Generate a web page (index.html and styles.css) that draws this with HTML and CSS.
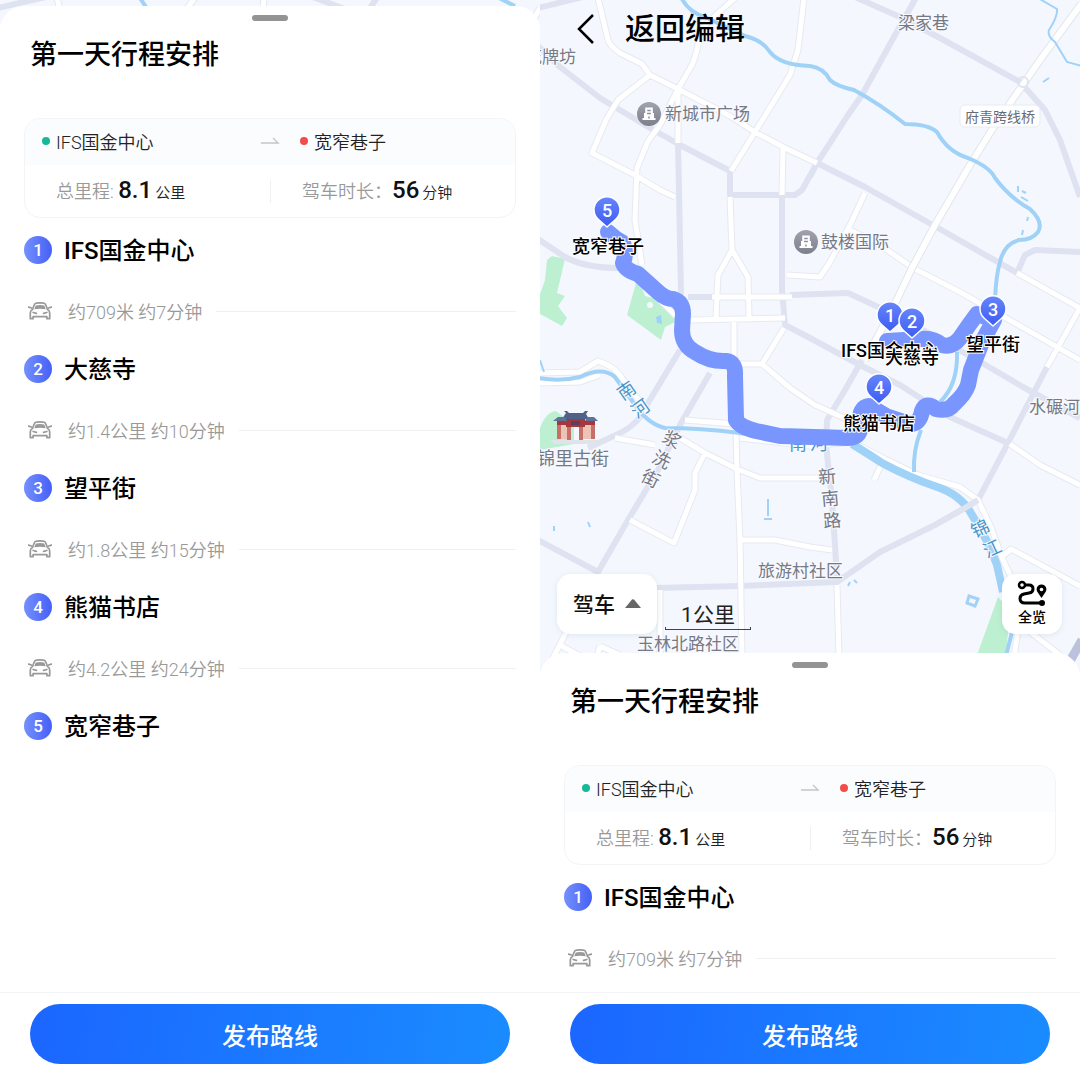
FILE: index.html
```html
<!DOCTYPE html>
<html lang="zh-CN">
<head>
    <meta charset="UTF-8">
    <meta name="viewport" content="width=device-width, initial-scale=1.0">
    <title>第一天行程安排</title>
    <link rel="stylesheet" href="styles.css">
</head>
<body>
    <!-- Shared icons -->
    <svg class="sprite" aria-hidden="true">
        <symbol id="icon-car" viewBox="0 0 24 18">
            <path d="M4.5 7.500 L6.300 2.800 Q6.800 1.200 8.500 1.100 Q12 .7 15.500 1.100 Q17.200 1.200 17.700 2.800 L19.500 7.500 Q21.700 8.600 21.700 11 V16.700 H18.900 V14.700 H5.100 V16.700 H2.300 V11 Q2.300 8.600 4.500 7.500Z" fill="none" stroke="#999" stroke-width="1.700" stroke-linejoin="round"/>
            <path d="M6.300 7.200 L7.700 3.400 Q12 2.500 16.300 3.400 L17.700 7.200 Q12 6.200 6.300 7.200Z" fill="#999"/>
            <path d="M.6 5.200 L3.400 6 M23.400 5.200 L20.600 6 M5.200 10.500 L8.400 11.300 M18.800 10.500 L15.600 11.300" stroke="#999" stroke-width="1.800" stroke-linecap="round"/>
        </symbol>
        <symbol id="icon-arrow" viewBox="0 0 20 10">
            <path d="M1 7 H18 L13 2" fill="none" stroke="#c4c6c8" stroke-width="1.400"/>
        </symbol>
    </svg>

    <main class="screens">
        <!-- Full itinerary -->
        <section class="screen">
            <div class="map map-peek">
                <svg class="map-canvas" viewBox="0 0 540 26" preserveAspectRatio="xMidYMin slice" aria-hidden="true">
                    <path class="major" d="M-2 8 L50 -4 M310 -4 L358 14 M378 -4 L365 16"/>
                    <path class="minor-case" d="M57 -2 L64 26 M195 -2 L184 12 M264 -2 L262 20 M540 8 L530 26"/>
                    <path class="minor" d="M57 -2 L64 26 M195 -2 L184 12 M264 -2 L262 20 M540 8 L530 26"/>
                    <path class="water" d="M140 -2 L148 10 M497 -3 L515 6"/>
                </svg>
            </div>
            <div class="sheet">
                <div class="handle"></div>
                <h1 class="sheet-title">第一天行程安排</h1>
                <div class="summary">
                    <div class="summary-route">
                        <span class="place place-from">IFS国金中心</span>
                        <svg class="arrow" aria-hidden="true"><use href="#icon-arrow"/></svg>
                        <span class="place place-to">宽窄巷子</span>
                    </div>
                    <div class="summary-stats">
                        <p class="stat">总里程: <strong>8.1</strong><small>公里</small></p>
                        <p class="stat stat-time">驾车时长：<strong>56</strong><small>分钟</small></p>
                    </div>
                </div>
                <ol class="stops">
                    <li>
                        <h2 class="stop"><span class="badge">1</span>IFS国金中心</h2>
                        <p class="leg"><svg class="car" aria-hidden="true"><use href="#icon-car"/></svg>约709米 约7分钟</p>
                    </li>
                    <li>
                        <h2 class="stop"><span class="badge">2</span>大慈寺</h2>
                        <p class="leg"><svg class="car" aria-hidden="true"><use href="#icon-car"/></svg>约1.4公里 约10分钟</p>
                    </li>
                    <li>
                        <h2 class="stop"><span class="badge">3</span>望平街</h2>
                        <p class="leg"><svg class="car" aria-hidden="true"><use href="#icon-car"/></svg>约1.8公里 约15分钟</p>
                    </li>
                    <li>
                        <h2 class="stop"><span class="badge">4</span>熊猫书店</h2>
                        <p class="leg"><svg class="car" aria-hidden="true"><use href="#icon-car"/></svg>约4.2公里 约24分钟</p>
                    </li>
                    <li>
                        <h2 class="stop"><span class="badge">5</span>宽窄巷子</h2>
                    </li>
                </ol>
            </div>
            <footer class="footer">
                <button type="button" class="publish">发布路线</button>
            </footer>
        </section>

        <!-- Map with collapsed itinerary -->
        <section class="screen">
            <div class="map">
                <svg class="map-canvas" viewBox="0 0 540 673" preserveAspectRatio="xMidYMin slice">
                    <defs>
                        <linearGradient id="pin-fill" x1="0" y1="0" x2="0" y2="1">
                            <stop offset="0" stop-color="#6686fb"/>
                            <stop offset="1" stop-color="#3d5bf3"/>
                        </linearGradient>
                        <linearGradient id="poi-fill" x1="0" y1="0" x2="0" y2="1">
                            <stop offset="0" stop-color="#a0a3ac"/>
                            <stop offset="1" stop-color="#7d808b"/>
                        </linearGradient>
                        <path id="pin" d="M0 0 L-8.500 -7.500 A13 13 0 1 1 8.500 -7.500 Z" fill="url(#pin-fill)" stroke="#fff" stroke-width="1.500" stroke-linejoin="round"/>
                        <g id="poi">
                            <circle r="12" fill="url(#poi-fill)"/>
                            <path d="M-6.500 6 V4 H-5 V-1 H-3.800 V-6.500 H3.800 V-1 H5 V4 H6.500 V6 Z" fill="#fff"/>
                            <path d="M-1.700 -3.500 H1.700 M-1.900 -.5 H1.900 M0 4.500 V2.500" fill="none" stroke="#8b8e98" stroke-width="1.500"/>
                        </g>
                        <path id="minor-roads" d="M58 -2 L68 40 Q70 46 80 53 L102 64 L110 75 L138 89 L190 116 L215 132 L245 148 L277 163
                            M195 -2 L178 13 L160 30 Q158 52 152 65 L138 89 L120 125 L108 141 L97 168 L95 220 L102 265
                            M110 75 L78 100 L66 120 L52 153 L95 175 L120 190 L135 197
                            M264 -2 L258 50 L250 75 L215 132 L191 171
                            M138 89 V143
                            M243 148 L242 195
                            M325 193 L310 225 L290 262 L280 277 L247 275
                            M310 230 L340 245 L373 268 L420 292 L540 360
                            M477 273 L540 308 L507 367
                            M190 197 L192 250 L178 275 L176 317 M192 250 L208 277 L209 317
                            M172 297 H252 M150 320 L245 318 M194 320 V362
                            M200 364 H222 L244 328 M222 364 L250 388 L275 405 L320 425
                            M120 300 L136 316
                            M-2 373 L40 372 L58 361 Q74 366 82 378 L108 412 M-2 383 L40 382 L60 375
                            M75 438 L115 445 M145 420 L195 424
                            M140 438 L165 453 L197 469 L220 478 H290
                            M196 430 L197 470 L200 540 L202 658
                            M165 453 L155 473 V490 L134 543 L90 520
                            M200 540 H235 L270 547 L292 550
                            M120 590 V658 M297 585 L299 658
                            M40 605 L12 660 M20 645 L40 656 M60 646 L56 660 M60 646 L80 655
                            M200 438 L270 446 L312 442 L345 459 L378 475 L420 487 L438 500 L450 525 L463 560 L482 600 L474 658
                            M342 463 L334 480
                            M463 556 L471 549 L540 586
                            M470 444 L500 465 L540 485
                            M485 628 L520 655"/>
                    </defs>

                    <!-- Parks -->
                    <g fill="#bdf0d1">
                        <path d="M-2 300 L5 280 L7 260 L12 256 L25 259 L17 293 L25 296 L18 306 L27 318 L22 326 L-2 313Z"/>
                        <path d="M98 276 L87 315 L121 340 L125 327 L135 322 L135 315 L120 300 L105 296Z"/>
                        <path d="M0 428 Q6 412 16 411 L34 425 V444 L0 450Z"/>
                        <path d="M458 597 L437 655 H466 L470 610Z"/>
                    </g>
                    <circle cx="110" cy="305" r="3" fill="#f4f8fe"/>
                    <path d="M116 317 L121 315 L122 324 L117 323Z" fill="#9fd2f8"/>

                    <!-- Roads -->
                    <path class="major" d="M-2 8 L55 -6 M-2 46 L20 67 L60 98 L110 128 L140 145 L190 171 V195 H255 L262 190 L277 163
                        M377 -4 L355 35 L322 95 L308 115 L292 140 L277 163 L270 177
                        M315 -3 L360 17 L400 38 L480 82 L505 110 L520 140 L540 197
                        M138 143 L139 190 L141 295 M277 163 L325 187 L398 228 L477 273 L485 255 L495 250 L540 252
                        M242 195 V290 L245 325 L270 338 L320 365 L360 385 L410 417 L470 444
                        M148 297 H172 M250 295 L308 293 L360 317 L437 360 L483 387 L540 418
                        M-2 239 L25 257 Q45 268 80 268
                        M140 350 L108 403 Q100 424 78 434 L48 448
                        M170 373 L140 425 L118 470 L88 520 L58 572 L-2 540
                        M322 360 L305 390 L287 420 L286 445 L292 500 L295 545 L297 580
                        M507 367 L490 400 L468 443 L438 500 L425 508 L395 525 L340 552 L297 582 L200 586 L115 588"/>
                    <path d="M542 640 L526 668" stroke="#bcc2de" stroke-width="9"/>
                    <use href="#minor-roads" class="minor-case"/>
                    <use href="#minor-roads" class="minor"/>
                    <g fill="none">
                        <path d="M542 3 L500 60 L455 125 L430 165 L395 225 L372 268 L352 310 L325 360" stroke="#e2e5ec" stroke-width="8"/>
                        <path d="M542 3 L500 60 L455 125 L430 165 L395 225 L372 268 L352 310 L325 360" stroke="#fff" stroke-width="6"/>
                    </g>
                    <circle cx="483" cy="82" r="5" fill="none" stroke="#dde3f0" stroke-width="2"/>

                    <!-- Water -->
                    <g class="water">
                        <path d="M141 -3 Q148 12 165 17 L205 36 Q222 40 230 52 Q240 65 270 66 Q284 68 290 80 Q296 86 314 90 Q340 104 365 124 Q388 124 397 132 Q408 152 428 158 Q450 167 455 178 Q470 198 490 209 Q504 222 498 232 Q492 240 479 240 Q464 244 460 262 Q456 275 455 300"/>
                        <path d="M417 352 Q418 385 400 402 M381 430 Q373 450 374 472"/>
                        <path class="stream" d="M498 -2 L517 9 Q518 16 509 30 Q507 36 515 42 L527 62 L542 66"/>
                        <path class="stream" d="M503 82 L509 78 M478 186 V192 M482 191 L486 193 M481 197 L488 201 M488 217 L487 221 M483 230 L482 235 M228 499 V516 M224 519 H232 M14 526 V531 M48 522 L50 527 M308 586 L310 582 M314 580 L317 583"/>
                        <path class="stream" d="M0 360 L4 372"/>
                        <path d="M-2 378 Q20 382 40 377 Q62 366 75 377 L95 405 Q108 424 125 428 Q160 428 200 433 L270 443 H310"/>
                        <path class="river" d="M312 444 Q330 455 342 463 Q370 478 400 488 Q422 496 432 515 Q448 540 457 565 L463 592"/>
                        <path d="M475 620 L466 656"/>
                    </g>
                    <path d="M429 596 L438 599 L435 606 L427 603Z" fill="none" stroke="#a4d2f6" stroke-width="3"/>
                    <path d="M395 525 L425 508 L438 500" fill="none" stroke="#dfe2ef" stroke-width="6"/>

                    <!-- Old street gate -->
                    <g>
                        <path d="M10 440 H62 L57 444 H14Z" fill="#dfe3ea"/>
                        <path d="M17 422 H29 V439 H17Z M42 422 H55 V439 H42Z" fill="#edc4b4"/>
                        <path d="M17 422 H21 V439 H17Z M27 422 H31 V440 H27Z M39 422 H43 V440 H39Z M51 422 H55 V439 H51Z" fill="#c77069"/>
                        <path d="M26 419 H45 V427 H26Z M17 421 H26 V425 H17Z M45 421 H55 V425 H45Z" fill="#a4383f"/>
                        <path d="M31 421 H40 V425 H31Z" fill="#5a405d"/>
                        <path d="M22 419 L26 413 L24 411 H27 L29 413 H43 L45 411 H48 L46 414 L49 419Z" fill="#4f6188"/>
                        <path d="M13 421 L18 417 H25 L27 421Z M45 421 L47 417 H54 L58 421Z" fill="#5e7399"/>
                    </g>

                    <!-- River name that runs under the route -->
                    <g class="label label-large label-char label-water">
                        <text x="258" y="450">南</text>
                        <text x="279" y="450">河</text>
                    </g>

                    <!-- Route -->
                    <path class="route" d="M68 232 Q75 239 83 243 Q87 253 83 263 Q85 270 98 274 L118 292 Q126 299 133 299 Q143 302 143 314 L142 330 Q142 345 155 352 Q170 362 186 361 Q196 362 195 376 L196 420 Q200 427 216 431 L240 436 L308 438 Q322 438 320 423 Q319 407 329 406 L346 416 L370 424 Q380 424 382 411 Q386 401 396 409 Q408 412 414 404 Q425 394 428 385 L431 370 L442 342 L454 320 L437 314 Q428 326 420 338 Q412 348 402 345 Q393 338 382 339 L347 341"/>

                    <!-- Map labels -->
                    <g class="label">
                        <text x="-15" y="63">花牌坊</text>
                        <text x="358" y="29">梁家巷</text>
                        <text x="125" y="120">新城市广场</text>
                        <text x="281" y="248">鼓楼国际</text>
                        <text x="489" y="413">水碾河</text>
                        <text x="-3" y="465" class="label-large">锦里古街</text>
                        <text x="218" y="577">旅游村社区</text>
                        <text x="97" y="650">玉林北路社区</text>
                    </g>
                    <rect x="420" y="105" width="80" height="22" rx="5" fill="#fff" stroke="#e7eaf2"/>
                    <text x="460" y="122" class="label-bridge">府青跨线桥</text>
                    <g class="label label-large label-char">
                        <text transform="translate(132 439) rotate(27)" y="7">浆</text>
                        <text transform="translate(122 459) rotate(27)" y="7">洗</text>
                        <text transform="translate(111 478) rotate(27)" y="7">街</text>
                        <text transform="translate(287 476) rotate(-5)" y="7">新</text>
                        <text transform="translate(290 498) rotate(-5)" y="7">南</text>
                        <text transform="translate(292 520) rotate(-5)" y="7">路</text>
                    </g>
                    <g class="label label-large label-char label-water">
                        <text transform="translate(86 390) rotate(-35)" y="7">南</text>
                        <text transform="translate(100 408) rotate(-35)" y="7">河</text>
                        <text transform="translate(440 528) rotate(-25)" y="7">锦</text>
                        <text transform="translate(452 548) rotate(-25)" y="7">江</text>
                    </g>

                    <use href="#poi" x="109" y="114"/>
                    <use href="#poi" x="266" y="242"/>

                    <g class="stop-label">
                        <text x="68" y="253">宽窄巷子</text>
                        <text x="350" y="357">IFS国金中心</text>
                        <text x="372" y="364">大慈寺</text>
                        <text x="453" y="351">望平街</text>
                        <text x="339" y="430">熊猫书店</text>
                    </g>

                    <use href="#pin" x="67" y="227"/>
                    <use href="#pin" x="350" y="332"/>
                    <use href="#pin" x="372" y="338"/>
                    <use href="#pin" x="453" y="326"/>
                    <use href="#pin" x="339" y="404"/>
                    <g class="pin-number">
                        <text x="67" y="217">5</text>
                        <text x="350" y="322">1</text>
                        <text x="372" y="328">2</text>
                        <text x="453" y="316">3</text>
                        <text x="339" y="394">4</text>
                    </g>
                </svg>

                <a class="back" href="#">
                    <svg viewBox="0 0 20 32" aria-hidden="true"><path d="M17 2 L3 16 L17 30" fill="none" stroke="#000" stroke-width="2.500"/></svg>
                    返回编辑
                </a>

                <div class="map-tools">
                    <div class="mode">
                        <select aria-label="出行方式">
                            <option>驾车</option>
                        </select>
                        <svg class="mode-arrow" viewBox="0 0 16 9" aria-hidden="true"><path d="M0 9 L7 .6 Q8 -.3 9 .6 L16 9Z" fill="#666"/></svg>
                    </div>
                    <div class="scale">1公里</div>
                    <button type="button" class="overview">
                        <svg viewBox="0 0 30 26" aria-hidden="true">
                            <g fill="none" stroke="#000" stroke-width="3">
                                <circle cx="5" cy="5" r="3" stroke-width="2.500"/>
                                <path d="M8 5 H12 Q16 5 16 9 Q16 12.500 12 13 L7 14 Q3 15 3 18.500 Q3 23 8 23 H24"/>
                            </g>
                            <circle cx="25" cy="23" r="3"/>
                            <path d="M24.500 18 L20.800 12.500 A4.900 4.900 0 1 1 28.200 12.500Z"/>
                            <circle cx="24.500" cy="9.500" r="1.800" fill="#fff"/>
                        </svg>
                        全览
                    </button>
                </div>
            </div>
            <div class="sheet">
                <div class="handle"></div>
                <h1 class="sheet-title">第一天行程安排</h1>
                <div class="summary">
                    <div class="summary-route">
                        <span class="place place-from">IFS国金中心</span>
                        <svg class="arrow" aria-hidden="true"><use href="#icon-arrow"/></svg>
                        <span class="place place-to">宽窄巷子</span>
                    </div>
                    <div class="summary-stats">
                        <p class="stat">总里程: <strong>8.1</strong><small>公里</small></p>
                        <p class="stat stat-time">驾车时长：<strong>56</strong><small>分钟</small></p>
                    </div>
                </div>
                <ol class="stops">
                    <li>
                        <h2 class="stop"><span class="badge">1</span>IFS国金中心</h2>
                        <p class="leg"><svg class="car" aria-hidden="true"><use href="#icon-car"/></svg>约709米 约7分钟</p>
                    </li>
                </ol>
            </div>
            <footer class="footer">
                <button type="button" class="publish">发布路线</button>
            </footer>
        </section>
    </main>
</body>
</html>
```

FILE: styles.css
```css
* {
    box-sizing: border-box;
}
body {
    margin: 0;
    font-family: Roboto, "Noto Sans CJK SC", sans-serif;
    color: #000;
    background-color: #fff;
}
h1, h2, p, ol {
    margin: 0;
    padding: 0;
}
button, select {
    font-family: inherit;
    border: none;
    cursor: pointer;
}
.sprite {
    display: none;
}
.screens {
    display: grid;
    grid-template-columns: 1fr 1fr;
    min-height: 100vh;
}
.screen {
    display: flex;
    flex-direction: column;
    min-width: 0;
}

/* Map */
.map {
    position: relative;
    height: 673px;
    background-color: #f4f8fe;
    overflow: hidden;
}
.map-peek {
    height: 26px;
}
.map-canvas {
    display: block;
    width: 100%;
    height: 100%;
}
.major {
    fill: none;
    stroke: #dfe2f0;
    stroke-width: 6;
    stroke-linejoin: round;
}
.minor-case, .minor {
    fill: none;
    stroke: #e6e9f0;
    stroke-width: 7;
    stroke-linejoin: round;
}
.minor {
    stroke: #fff;
    stroke-width: 5;
}
.water {
    fill: none;
    stroke: #a0d2f8;
    stroke-width: 4;
}
.water .stream {
    stroke-width: 2;
}
.water .river {
    stroke-width: 8;
}
.route {
    fill: none;
    stroke: #7996fe;
    stroke-width: 16;
    stroke-linecap: round;
    stroke-linejoin: round;
}
.label {
    font-size: 17px;
    fill: #757985;
    stroke: #f8faff;
    stroke-width: 2;
    paint-order: stroke;
}
.label-large {
    font-size: 18px;
}
.label-char, .label-bridge, .stop-label, .pin-number {
    text-anchor: middle;
}
.label-water {
    fill: #4a94c8;
}
.label-bridge {
    font-size: 14px;
    fill: #666b78;
}
.stop-label {
    font-size: 18px;
    font-weight: 500;
    stroke: #fff;
    stroke-width: 2;
    paint-order: stroke;
}
.pin-number {
    font-size: 18px;
    font-weight: 500;
    fill: #fff;
}

/* Controls over the map */
.back {
    position: absolute;
    top: 9px;
    left: 36px;
    display: flex;
    align-items: center;
    gap: 29px;
    font-size: 30px;
    font-weight: 500;
    line-height: 40px;
    color: #000;
    text-decoration: none;
}
.back svg {
    width: 20px;
    height: 32px;
}
.map-tools {
    position: absolute;
    left: 17px;
    right: 18px;
    bottom: 39px;
    display: flex;
    align-items: flex-end;
    gap: 8px;
}
.mode {
    position: relative;
}
.mode select {
    appearance: none;
    width: 100px;
    height: 60px;
    padding: 2px 16px 0;
    font-size: 21px;
    font-weight: 500;
    color: #111;
    background-color: #fff;
    border-radius: 14px;
    box-shadow: 0 1px 6px rgba(80, 90, 130, 0.12);
}
.mode-arrow {
    position: absolute;
    top: 25px;
    right: 16px;
    width: 16px;
    height: 9px;
    pointer-events: none;
}
.scale {
    width: 86px;
    margin-bottom: 4px;
    font-size: 21px;
    line-height: 28px;
    text-align: center;
    color: #222;
    border: 1px solid #444;
    border-top: none;
    border-image: linear-gradient(transparent 90%, #444 90%) 1;
}
.overview {
    display: flex;
    flex-direction: column;
    align-items: center;
    width: 60px;
    height: 60px;
    margin-left: auto;
    padding: 6px 0 0;
    font-size: 14px;
    font-weight: 500;
    line-height: 22px;
    color: #000;
    background-color: #fff;
    border-radius: 14px;
    box-shadow: 0 1px 6px rgba(80, 90, 130, 0.12);
}
.overview svg {
    width: 30px;
    height: 26px;
}

/* Bottom sheet */
.sheet {
    position: relative;
    margin-top: -20px;
    padding: 9px 24px 0;
    background-color: #fff;
    border-radius: 24px 24px 0 0;
}
.handle {
    width: 36px;
    height: 6px;
    margin: 0 auto;
    background-color: #939393;
    border-radius: 3px;
}
.sheet-title {
    margin: 14px 6px 43px;
    font-size: 27px;
    font-weight: 500;
    line-height: 40px;
}
.summary {
    border: 1px solid #f3f4f5;
    border-radius: 16px;
    overflow: hidden;
}
.summary-route {
    display: grid;
    grid-template-columns: 1fr 20px 1fr;
    align-items: center;
    height: 46px;
    padding: 0 17px 2px;
    background-color: #fafcfe;
}
.place {
    display: flex;
    align-items: center;
    gap: 6px;
    font-size: 18px;
    font-weight: 350;
    color: #222;
}
.place::before {
    content: "";
    width: 8px;
    height: 8px;
    border-radius: 50%;
    background-color: #17b897;
}
.place-to {
    padding-left: 20px;
}
.place-to::before {
    background-color: #f24c4c;
}
.arrow {
    width: 20px;
    height: 10px;
}
.summary-stats {
    display: grid;
    grid-template-columns: 1fr 1fr;
    align-items: center;
    height: 52px;
}
.stat {
    padding-left: 31px;
    font-size: 18px;
    font-weight: 350;
    line-height: 20px;
    color: #999;
}
.stat-time {
    border-left: 1px solid #f0f0f0;
}
.stat strong {
    margin-right: 3px;
    font-size: 24px;
    font-weight: 500;
    color: #111;
}
.stat small {
    font-size: 15px;
    color: #222;
}

/* Stops and legs */
.stops {
    margin-top: 15px;
    list-style: none;
}
.stop {
    display: flex;
    align-items: center;
    gap: 12px;
    font-size: 24px;
    font-weight: 500;
    line-height: 36px;
}
.badge {
    width: 28px;
    height: 28px;
    margin-bottom: 2px;
    font-size: 17px;
    line-height: 28px;
    text-align: center;
    color: #fff;
    background: linear-gradient(90deg, #7590fc, #4560f6);
    border-radius: 50%;
}
.leg {
    display: flex;
    align-items: center;
    height: 24px;
    margin: 30px 0 29px;
    padding-left: 4px;
    font-size: 18px;
    font-weight: 350;
    color: #999;
}
.leg::after {
    content: "";
    flex: 1;
    height: 1px;
    margin-left: 14px;
    background-color: #f0f0f0;
}
li:only-child .leg {
    margin-bottom: 0;
}
.car {
    width: 24px;
    height: 18px;
    margin-right: 16px;
}

/* Footer */
.footer {
    margin-top: auto;
    padding: 11px 30px 16px;
    border-top: 1px solid #f3f4f5;
}
.publish {
    display: block;
    width: 100%;
    height: 60px;
    font-size: 24px;
    font-weight: 500;
    color: #fff;
    background: linear-gradient(100deg, #1b66ff, #1a8cff);
    border-radius: 30px;
}
```
